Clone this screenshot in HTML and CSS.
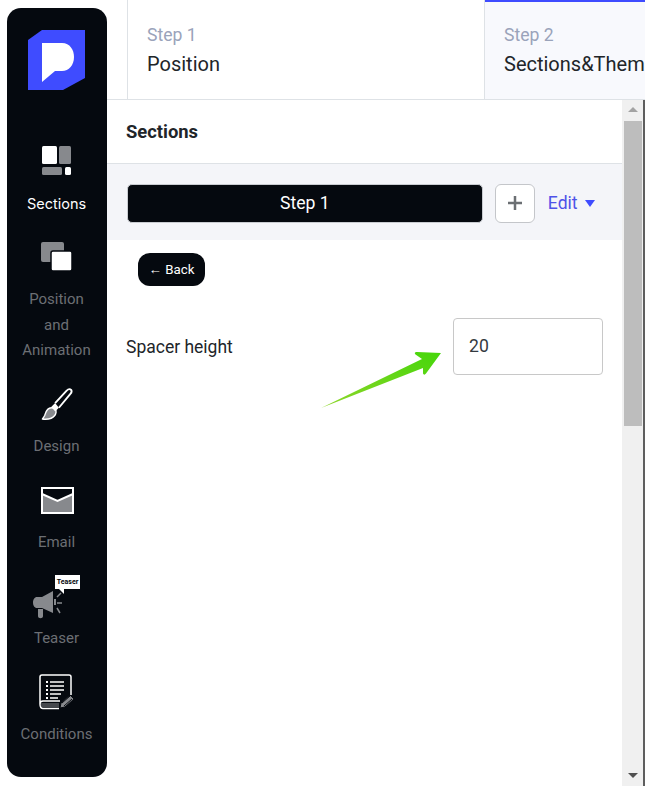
FILE: index.html
```html
<!DOCTYPE html>
<html lang="en">
<head>
  <meta charset="UTF-8">
  <meta name="viewport" content="width=device-width, initial-scale=1.0">
  <title>Sections</title>
  <link rel="stylesheet" href="styles.css">
</head>
<body>
  <div class="app">
    <nav class="sidebar">
      <svg class="logo" width="57" height="60" viewBox="0 0 57 60">
        <path d="M14 0H57V48L35 60H0V10Z" fill="#3f4cff"/>
        <path d="M14 13H34C42 13 46 20 46 27C46 35 41 41 34 41H27L14 52Z" fill="#fff"/>
      </svg>

      <a class="nav-item active">
        <span class="nav-icon">
          <svg width="32" height="30" viewBox="0 0 32 30">
            <rect x="1" y="0" width="15" height="18" rx="1.5" fill="#fff"/>
            <rect x="18" y="0" width="12" height="18" rx="1.5" fill="#87898d"/>
            <rect x="1" y="21" width="20" height="8" rx="1.5" fill="#87898d"/>
            <rect x="24" y="21" width="6" height="8" rx="1.5" fill="#fff"/>
          </svg>
        </span>
        <span class="nav-label">Sections</span>
      </a>

      <a class="nav-item">
        <span class="nav-icon">
          <svg width="32" height="30" viewBox="0 0 32 30">
            <rect x="0" y="0" width="23" height="20" rx="2" fill="#87898d"/>
            <rect x="10" y="9" width="21" height="20" rx="2" fill="#fff" stroke="#05090f" stroke-width="1.5"/>
          </svg>
        </span>
        <span class="nav-label">Position and Animation</span>
      </a>

      <a class="nav-item">
        <span class="nav-icon">
          <svg width="32" height="34" viewBox="0 0 34 34">
            <path d="M11 21C6 21 5 26 4 29C3 31 2 32 1.500 33C8 34 15 32 16 26C16.500 23 14 21 11 21Z" fill="#87898d" stroke="#fff" stroke-width="1.500" stroke-linejoin="round"/>
            <path d="M11 20L15 25L19 21L15 16Z" fill="#fff"/>
            <path d="M15 16L27 3C29 1 31 1 32 2C33 3.500 32.500 5 31 6.500L19 21" fill="none" stroke="#fff" stroke-width="2" stroke-linejoin="round"/>
          </svg>
        </span>
        <span class="nav-label">Design</span>
      </a>

      <a class="nav-item">
        <span class="nav-icon">
          <svg width="33" height="27" viewBox="0 0 33 27">
            <rect x="1" y="1" width="31" height="25" fill="#87898d" stroke="#fff" stroke-width="2"/>
            <path d="M2 2H31V7L16.500 14L2 7Z" fill="#05090f"/>
            <path d="M1 7L16.500 14L32 7" fill="none" stroke="#fff" stroke-width="2"/>
          </svg>
        </span>
        <span class="nav-label">Email</span>
      </a>

      <a class="nav-item">
        <span class="nav-icon">
          <svg class="teaser-megaphone" width="32" height="30" viewBox="0 0 32 30">
            <path d="M5 7H10L21 1V23L10 18H5C2.500 18 1 15.500 1 12.500C1 9.500 2.500 7 5 7Z" fill="#87898d"/>
            <path d="M6 19H11V26C11 29 6 29 6 26Z" fill="#87898d"/>
            <path d="M23 9V15" stroke="#87898d" stroke-width="2"/>
            <path d="M25 7L29 3M25 13H30M25 18L28 23" stroke="#87898d" stroke-width="1.500"/>
          </svg>
          <span class="teaser-bubble">Teaser</span>
        </span>
        <span class="nav-label">Teaser</span>
      </a>

      <a class="nav-item">
        <span class="nav-icon">
          <svg width="36" height="36" viewBox="0 0 36 36">
            <path d="M1 30V3C1 1.500 2 1 3 1H30C31 1 32 2 32 3V21M1 30C1 28 2 27 4 27H21M1 30C1 33 2 34.500 4 34.500H20" fill="none" stroke="#fff" stroke-width="1.500"/>
            <path d="M2 30H20M2 32H20" stroke="#87898d" stroke-width="1"/>
            <path d="M7 8H9M7 12H9M7 16H9M7 20H9M7 24H9" stroke="#fff" stroke-width="2"/>
            <path d="M11 8H25M11 12H25M11 16H25M11 20H22M11 24H19" stroke="#fff" stroke-width="1.500"/>
            <path d="M21 34L22 29L31 21L35 25L26 33Z" fill="#87898d" stroke="#05090f" stroke-width="1"/>
            <path d="M23 29L31 22M25 32L33 25" stroke="#05090f" stroke-width="1"/>
          </svg>
        </span>
        <span class="nav-label">Conditions</span>
      </a>
    </nav>

    <div class="main">
      <div class="tabs">
        <div class="tab">
          <div class="tab-step">Step 1</div>
          <div class="tab-name">Position</div>
        </div>
        <div class="tab tab-active">
          <div class="tab-step">Step 2</div>
          <div class="tab-name">Sections&amp;Theme</div>
        </div>
      </div>

      <div class="content">
        <div class="panel">
          <h2 class="panel-title">Sections</h2>

          <div class="step-bar">
            <button class="step-button">Step 1</button>
            <button class="add-button">
              <svg width="16" height="16" viewBox="0 0 16 16">
                <path d="M8 1V15M1 8H15" stroke="#6b6f73" stroke-width="2.500"/>
              </svg>
            </button>
            <a class="edit-link">Edit <span class="caret"></span></a>
          </div>

          <div class="panel-body">
            <button class="back-button">← Back</button>
            <div class="field">
              <label class="field-label" for="spacer">Spacer height</label>
              <input class="input" id="spacer" type="text" value="20">
            </div>
            <svg class="arrow" width="124" height="60" viewBox="0 0 124 60">
              <defs>
                <linearGradient id="arrowFill" x1="0" y1="1" x2="1" y2="0">
                  <stop offset="0" stop-color="#8fd62a"/>
                  <stop offset="1" stop-color="#45d60a"/>
                </linearGradient>
              </defs>
              <path d="M1 58L102 9L95.500 4.500C94 3 95 1.800 97 2L121 3L106 23.500C105 25 103.500 25 103 23.500L103 18Z" fill="url(#arrowFill)"/>
            </svg>
          </div>
        </div>

        <div class="scrollbar">
          <span class="scroll-up"></span>
          <div class="scroll-track">
            <div class="scroll-thumb"></div>
          </div>
          <span class="scroll-down"></span>
        </div>
      </div>
    </div>
  </div>
</body>
</html>
```

FILE: styles.css
```css
* {
  box-sizing: border-box;
  margin: 0;
  padding: 0;
}

html, body {
  height: 100%;
  overflow: hidden;
}

body {
  font-family: Roboto, "Liberation Sans", sans-serif;
  background-color: #fff;
  color: #212529;
}

.app {
  display: flex;
  height: 786px;
}

/* left navigation */
.sidebar {
  flex: none;
  width: 100px;
  height: 769px;
  margin: 8px 0 0 7px;
  padding-top: 22px;
  background-color: #05090f;
  border-radius: 14px;
  display: flex;
  flex-direction: column;
  align-items: center;
}

.logo {
  flex: none;
  display: block;
  margin-bottom: 30.6px;
  margin-right: 1px;
}

.nav-item {
  display: block;
  width: 100%;
  text-align: center;
  color: #6c6f74;
  font-size: 15px;
  line-height: 25.5px;
}

.nav-item.active {
  color: #fff;
  font-size: 14.5px;
  font-family: Inter, Roboto, sans-serif;
}

.nav-icon {
  position: relative;
  display: flex;
  height: 70.5px;
  padding-top: 11px;
  align-items: center;
  justify-content: center;
}

.nav-label {
  display: block;
  padding: 0 13px 0 12px;
}

.teaser-megaphone {
  margin: 17px 18px 0 0;
}

.teaser-bubble {
  position: absolute;
  left: 48px;
  top: 19px;
  width: 25px;
  height: 14px;
  background-color: #fff;
  color: #05090f;
  font-size: 7px;
  font-weight: 700;
  line-height: 14px;
}

.teaser-bubble::after {
  content: "";
  position: absolute;
  left: 3px;
  top: 13px;
  border-top: 6px solid #fff;
  border-left: 6px solid transparent;
}

/* top steps */
.main {
  flex: 1;
  min-width: 0;
  display: flex;
  flex-direction: column;
}

.tabs {
  flex: none;
  display: flex;
  height: 100px;
  padding-left: 20px;
  border-bottom: 1px solid #dee2e6;
  overflow: hidden;
}

.content {
  flex: 1;
  display: flex;
  min-height: 0;
}

.tab {
  flex: none;
  width: 358px;
  padding: 23px 19px 0;
  border-left: 1px solid #dee2e6;
  border-right: 1px solid #dee2e6;
}

.tab-active {
  width: 200px;
  border-left: 0;
  border-right: 0;
  border-top: 2px solid #3f4cff;
  padding-top: 21px;
  background-color: #f8f9fd;
}

.tab-step {
  font-size: 17.6px;
  line-height: 24px;
  color: #9aa3ba;
}

.tab-name {
  font-size: 20px;
  line-height: 30px;
  margin-top: 2px;
  white-space: nowrap;
}

/* sections panel */
.panel {
  flex: 1;
  min-width: 0;
}

.panel-title {
  height: 64px;
  padding: 20px 19px 0;
  font-size: 18.4px;
  line-height: 24px;
  font-weight: 700;
  border-bottom: 1px solid #dee2e6;
}

.step-bar {
  display: flex;
  align-items: center;
  height: 76px;
  padding: 2px 27px 0 20px;
  background-color: #f4f5f9;
}

.step-button {
  flex: 1;
  height: 39px;
  background-color: #05090f;
  color: #fff;
  font-family: inherit;
  font-size: 17.6px;
  border: 1px solid #c9ccd1;
  border-radius: 5px;
}

.add-button {
  flex: none;
  display: flex;
  align-items: center;
  justify-content: center;
  width: 40px;
  height: 39px;
  margin-left: 12px;
  background-color: #fff;
  border: 1px solid #c4c6ca;
  border-radius: 6px;
}

.edit-link {
  margin-left: 13px;
  color: #4f52e8;
  font-size: 17.6px;
  white-space: nowrap;
}

.caret {
  display: inline-block;
  margin-left: 3px;
  vertical-align: 2px;
  border-top: 7px solid #3f4cff;
  border-left: 5px solid transparent;
  border-right: 5px solid transparent;
}

.panel-body {
  position: relative;
  padding: 13px 19px 0;
}

.back-button {
  display: block;
  width: 67px;
  height: 33px;
  margin-left: 12px;
  background-color: #05090f;
  color: #fff;
  font-family: inherit;
  font-size: 13.3px;
  border: 0;
  border-radius: 12px;
}

.field {
  display: flex;
  align-items: center;
  justify-content: space-between;
  margin-top: 32px;
}

.field-label {
  font-size: 17.5px;
}

.input {
  width: 150px;
  height: 57px;
  padding: 0 15px 2px;
  color: #343a40;
  font-family: inherit;
  font-size: 17.6px;
  border: 1px solid #c8c8c8;
  border-radius: 4px;
}

.arrow {
  position: absolute;
  left: 213px;
  top: 110px;
}

/* fake browser scrollbar */
.scrollbar {
  flex: none;
  position: relative;
  display: flex;
  flex-direction: column;
  align-items: center;
  width: 23px;
  background-color: #f0f0f0;
  border-right: 2px solid #5e5e5e;
}

.scroll-up {
  margin-top: 7px;
  border-bottom: 5px solid #a3a3a3;
  border-left: 5px solid transparent;
  border-right: 5px solid transparent;
}

.scroll-track {
  flex: 1;
  width: 100%;
  padding: 9px 1px 0 2px;
}

.scroll-thumb {
  height: 305px;
  background-color: #bdbdbd;
}

.scroll-down {
  margin-bottom: 8px;
  border-top: 5px solid #505050;
  border-left: 5px solid transparent;
  border-right: 5px solid transparent;
}
```
